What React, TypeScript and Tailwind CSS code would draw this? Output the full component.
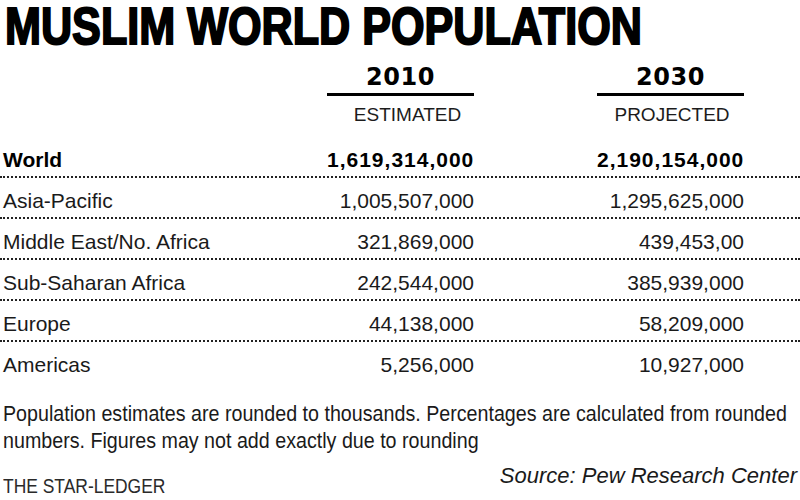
import React from "react";

type Row = {
  region: string;
  y2010: string;
  y2030: string;
  total?: boolean;
};

const rows: Row[] = [
  { region: "World", y2010: "1,619,314,000", y2030: "2,190,154,000", total: true },
  { region: "Asia-Pacific", y2010: "1,005,507,000", y2030: "1,295,625,000" },
  { region: "Middle East/No. Africa", y2010: "321,869,000", y2030: "439,453,00" },
  { region: "Sub-Saharan Africa", y2010: "242,544,000", y2030: "385,939,000" },
  { region: "Europe", y2010: "44,138,000", y2030: "58,209,000" },
  { region: "Americas", y2010: "5,256,000", y2030: "10,927,000" },
];

const YearHeader = ({ year, label, labelClass }: { year: string; label: string; labelClass: string }) => (
  <div className="w-[147px] flex flex-col items-center">
    <div className="font-['DejaVu_Sans',sans-serif] font-bold text-[24px] leading-[24px] text-black tracking-[0.5px]">
      {year}
    </div>
    <div className="w-full h-[3px] bg-black mt-[4px]" />
    <div className={labelClass}>{label}</div>
  </div>
);

const App = () => {
  return (
    <div className="w-[800px] h-[500px] bg-white overflow-hidden text-[#1a1a1a] font-['Liberation_Sans',Arial,sans-serif]">
      {/* no condensed face installed, so squeeze the wide one */}
      <h1 className="pl-[5px] h-[52px] whitespace-nowrap">
        <span className="inline-block origin-left scale-x-[0.83] font-bold text-[52px] leading-[52px] text-black [-webkit-text-stroke:2px_black]">
          MUSLIM WORLD POPULATION
        </span>
      </h1>

      <div className="flex mt-[13px]">
        <div className="w-[327px]" />
        <YearHeader
          year="2010"
          label="ESTIMATED"
          labelClass="mt-[9px] pl-[14px] text-[19px] leading-[19px] text-[#1c1c1c]"
        />
        <div className="w-[123px]" />
        <YearHeader
          year="2030"
          label="PROJECTED"
          labelClass="mt-[9px] pl-[3px] text-[19px] leading-[19px] text-[#1c1c1c]"
        />
      </div>

      <div className="mt-[13px] text-[21px] leading-[21px]">
        {rows.map((row, i) => (
          <div
            key={row.region}
            className={
              i < rows.length - 1
                ? "flex items-end h-[41px] pb-[6px] border-b-2 border-dotted border-[#222]"
                : "flex items-end h-[39px] pb-[6px]"
            }
          >
            <div className={row.total ? "w-[327px] pl-[3px] font-bold text-black" : "w-[327px] pl-[3px]"}>
              {row.region}
            </div>
            <div className={row.total ? "w-[147px] text-right font-bold text-black tracking-[1px]" : "w-[147px] text-right"}>
              {row.y2010}
            </div>
            <div className="w-[123px]" />
            <div className={row.total ? "w-[147px] text-right font-bold text-black tracking-[1px]" : "w-[147px] text-right"}>
              {row.y2030}
            </div>
          </div>
        ))}
      </div>

      <div className="mt-[19px] pl-[3px] h-[54px] text-[22px] leading-[27px] whitespace-nowrap">
        <div className="origin-left scale-x-[0.894] w-[880px]">
          Population estimates are rounded to thousands. Percentages are calculated from rounded
          <br />
          numbers. Figures may not add exactly due to rounding
        </div>
      </div>

      <div className="flex justify-between items-start">
        <div className="mt-[21px] pl-[3px] w-[200px] text-[21px] leading-[21px] text-[#2a2a2a] whitespace-nowrap">
          <span className="inline-block origin-left scale-x-[0.83]">THE STAR-LEDGER</span>
        </div>
        <div className="mt-[11px] pr-[3px] italic text-[22px] leading-[22px]">
          Source: Pew Research Center
        </div>
      </div>
    </div>
  );
};

export default App;
